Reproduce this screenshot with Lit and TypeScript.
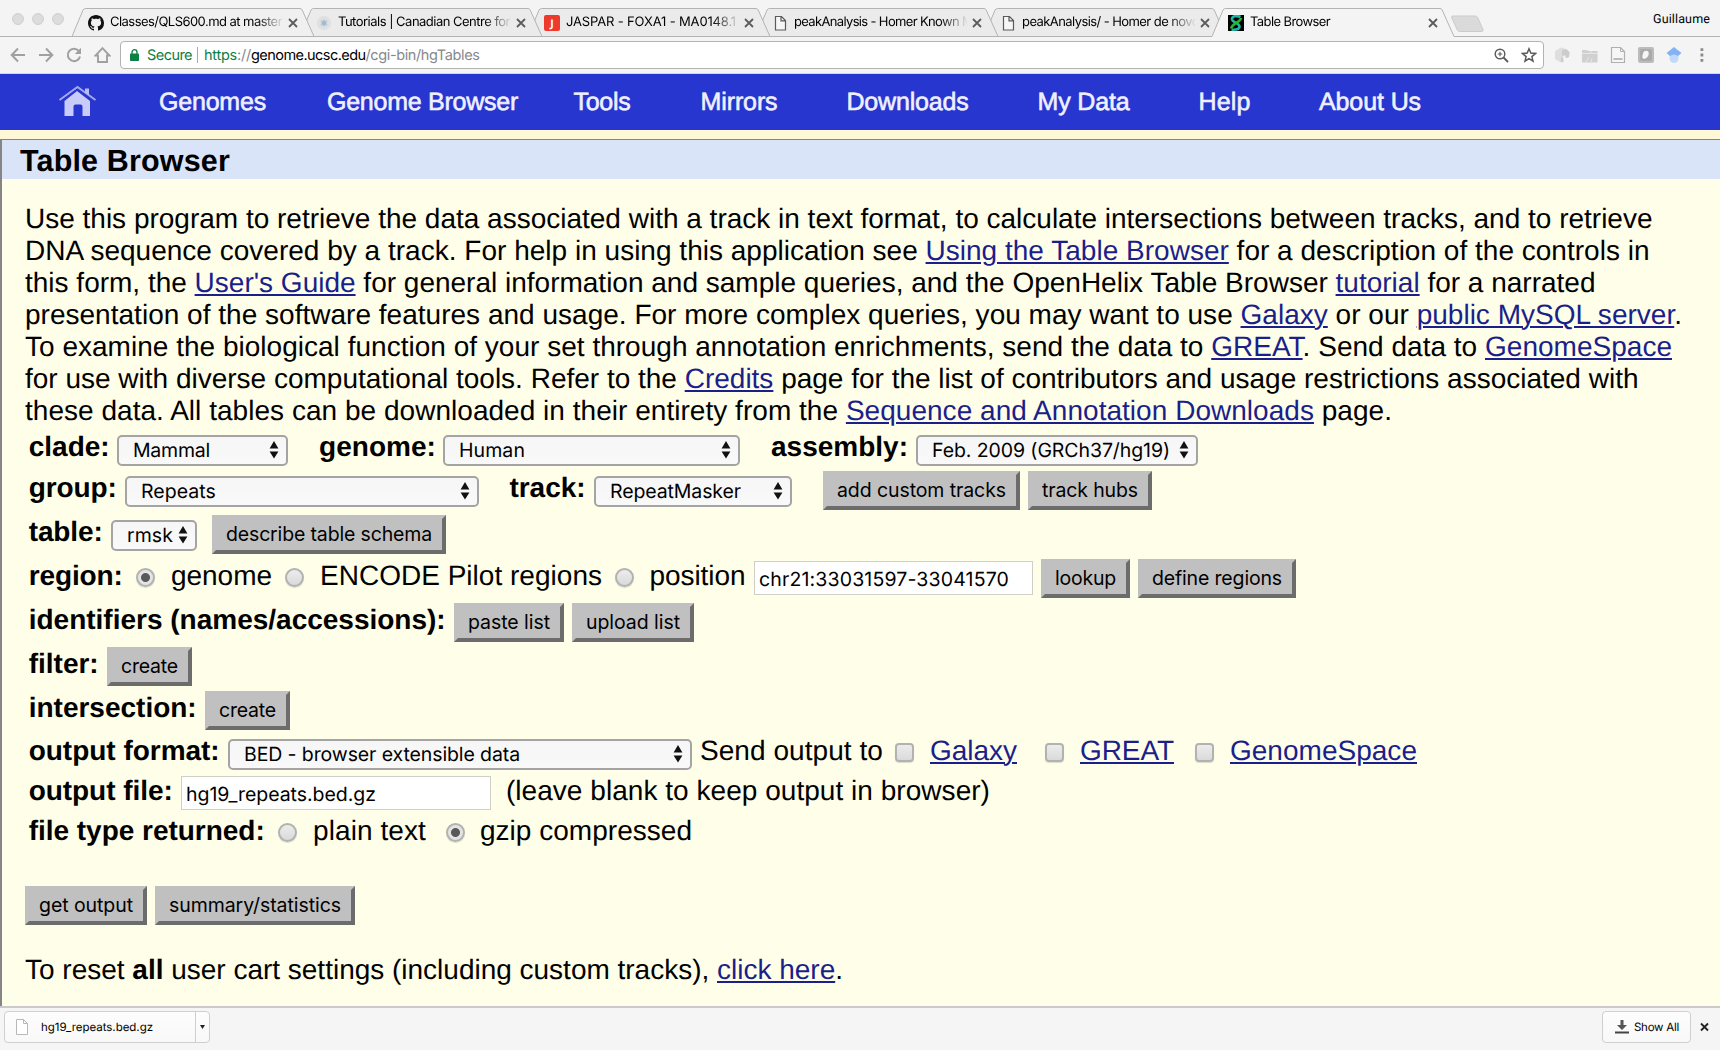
import { LitElement, html, css, svg, TemplateResult } from "lit";
import { customElement, property } from "lit/decorators.js";
import { classMap } from "lit/directives/class-map.js";

/** One line of text, tracked so that it spans exactly `w` pixels. */
@customElement("fit-text")
class FitText extends LitElement {
  @property({ type: Number }) w = 0;
  static styles = css`
    :host { display: inline-block; white-space: nowrap; }
  `;
  render() {
    return html`<slot></slot>`;
  }
  firstUpdated() {
    const natural = this.getBoundingClientRect().width;
    const count = (this.textContent || "").length;
    if (this.w && count) this.style.letterSpacing = `${(this.w - natural) / count}px`;
  }
}

type Item = { x: number; w: number; body: TemplateResult };

const fit = (w: number, body: unknown) => html`<fit-text .w=${w}>${body}</fit-text>`;
const label = (x: number, w: number, t: string): Item => ({ x, w, body: html`<b class="label">${fit(w - 1, t)}</b>` });
const text = (x: number, w: number, t: string): Item => ({ x, w, body: html`<span class="label">${fit(w - 1, t)}</span>` });
const link = (x: number, w: number, t: string): Item => ({
  x, w, body: html`<span class="label">${fit(w, html`<a>${t}</a>`)}</span>`,
});
const button = (x: number, w: number, t: string): Item => ({
  x, w, body: html`<button class="btn">${fit(w - 28, t)}</button>`,
});
const input = (x: number, w: number, tw: number, t: string): Item => ({
  x, w, body: html`<span class="field">${fit(tw, t)}</span>`,
});
const select = (x: number, w: number, tw: number, t: string): Item => ({
  x, w,
  body: html`<span class="select">${fit(tw, t)}
    <svg width="10" height="18" viewBox="0 0 10 18"><path d="M5 0 9.4 7.4H.6zM5 17.6.6 10.4h8.8z" fill="#111" /></svg></span>`,
});
const radio = (x: number, on = false): Item => ({ x, w: 19, body: html`<i class=${classMap({ radio: true, on })}></i>` });
const check = (x: number): Item => ({ x, w: 19, body: html`<i class="check"></i>` });

const rows: { h: number; items: Item[] }[] = [
  { h: 41, items: [
    label(28.700, 82, "clade:"), select(117, 171, 77, "Mammal"),
    label(319, 118, "genome:"), select(443, 297, 66, "Human"),
    label(771, 138, "assembly:"), select(916, 282, 238, "Feb. 2009 (GRCh37/hg19)"),
  ] },
  { h: 44, items: [
    label(28.700, 89, "group:"), select(125, 354, 75, "Repeats"),
    label(509.500, 77, "track:"), select(594, 198, 131, "RepeatMasker"),
    button(823, 197, "add custom tracks"), button(1028, 124, "track hubs"),
  ] },
  { h: 44, items: [label(28.700, 75, "table:"), select(111, 86, 46, "rmsk"), button(212, 234, "describe table schema")] },
  { h: 44, items: [
    label(28.700, 95, "region:"), radio(136, true), text(171, 102, "genome"), radio(285),
    text(320, 283, "ENCODE Pilot regions"), radio(615), text(649.500, 97, "position"),
    input(754, 279, 250, "chr21:33031597-33041570"), button(1041, 89, "lookup"), button(1138, 158, "define regions"),
  ] },
  { h: 44, items: [label(28.700, 418, "identifiers (names/accessions):"), button(454, 110, "paste list"), button(572, 122, "upload list")] },
  { h: 44, items: [label(28.700, 71, "filter:"), button(107, 85, "create")] },
  { h: 43, items: [label(28.700, 169, "intersection:"), button(205, 85, "create")] },
  { h: 40, items: [
    label(28.700, 192, "output format:"), select(228, 464, 276, "BED - browser extensible data"),
    text(700, 184, "Send output to"), check(895), link(930, 87, "Galaxy"), check(1045), link(1080, 94, "GREAT"),
    check(1195), link(1230, 187, "GenomeSpace"),
  ] },
  { h: 40, items: [
    label(28.700, 145, "output file:"), input(181, 310, 190, "hg19_repeats.bed.gz"),
    text(506, 485, "(leave blank to keep output in browser)"),
  ] },
  { h: 72, items: [
    label(28.700, 237, "file type returned:"), radio(278), text(313, 114, "plain text"), radio(446, true),
    text(480, 213, "gzip compressed"),
  ] },
  { h: 65, items: [button(25, 122, "get output"), button(155, 200, "summary/statistics")] },
];

const paragraph: [number, TemplateResult][] = [
  [1627.500, html`Use this program to retrieve the data associated with a track in text format, to calculate intersections between tracks, and to retrieve`],
  [1624.500, html`DNA sequence covered by a track. For help in using this application see <a>Using the Table Browser</a> for a description of the controls in`],
  [1570.500, html`this form, the <a>User's Guide</a> for general information and sample queries, and the OpenHelix Table Browser <a>tutorial</a> for a narrated`],
  [1657, html`presentation of the software features and usage. For more complex queries, you may want to use <a>Galaxy</a> or our <a>public MySQL server</a>.`],
  [1647, html`To examine the biological function of your set through annotation enrichments, send the data to <a>GREAT</a>. Send data to <a>GenomeSpace</a>`],
  [1613.500, html`for use with diverse computational tools. Refer to the <a>Credits</a> page for the list of contributors and usage restrictions associated with`],
  [1367, html`these data. All tables can be downloaded in their entirety from the <a>Sequence and Annotation Downloads</a> page.`],
];

const page = svg`<path d="M3.5 1.5h6l4 4v9.5h-10z M9 1.5v4.3h4.5" fill="#f6f6f6" stroke="#5a5a5a" stroke-width="1.2"/>`;
const icons = {
  github: svg`<path d="M8 0C3.58 0 0 3.58 0 8c0 3.54 2.29 6.53 5.47 7.59.4.07.55-.17.55-.38 0-.19-.01-.82-.01-1.49-2.01.37-2.53-.49-2.69-.94-.09-.23-.48-.94-.82-1.13-.28-.15-.68-.52-.01-.53.63-.01 1.08.58 1.23.82.72 1.21 1.87.87 2.33.66.07-.52.28-.87.51-1.07-1.78-.2-3.64-.89-3.64-3.95 0-.87.31-1.59.82-2.15-.08-.2-.36-1.02.08-2.12 0 0 .67-.21 2.2.82.64-.18 1.32-.27 2-.27s1.36.09 2 .27c1.53-1.04 2.2-.82 2.2-.82.44 1.1.16 1.92.08 2.12.51.56.82 1.27.82 2.15 0 3.07-1.87 3.75-3.65 3.95.29.25.54.73.54 1.48 0 1.07-.01 1.93-.01 2.2 0 .21.15.46.55.38A8.01 8.01 0 0 0 16 8c0-4.42-3.58-8-8-8z" fill="#111"/>`,
  snow: svg`<circle cx="8" cy="8" r="7.2" fill="#e0e0e0"/><path d="M8 4.500v7M5 6l6 4M11 6 5 10" stroke="#b9cbd9" stroke-width="2.200"/><circle cx="8" cy="8" r="2" fill="#9fb9cc"/>`,
  jaspar: svg`<rect width="16" height="16" rx="2" fill="#ee3a2c"/><text x="8" y="12" font-family="Open Sans, sans-serif" font-size="10.5" font-weight="700" text-anchor="middle" fill="#fff">J</text>`,
  page,
  helix: svg`<rect width="16" height="16" fill="#000"/><path d="M12.500 2C9 .3 3.500 1 4 4.500c.5 3 7.500 3.500 7.500 7 0 3-4 3.500-8 3" fill="none" stroke="#1fb5a4" stroke-width="2.600"/><path d="M13 3c0 4-9.300 5.500-9.800 10.500" fill="none" stroke="#2bb52b" stroke-width="2.600"/>`,
};

const tabs: { icon: unknown; w: number; title: string; active?: boolean }[] = [
  { icon: icons.github, w: 172, title: "Classes/QLS600.md at master" },
  { icon: icons.snow, w: 172, title: "Tutorials | Canadian Centre for" },
  { icon: icons.jaspar, w: 170, title: "JASPAR - FOXA1 - MA0148.1" },
  { icon: icons.page, w: 179, title: "peakAnalysis - Homer Known M" },
  { icon: icons.page, w: 177, title: "peakAnalysis/ - Homer de novo" },
  { icon: icons.helix, w: 80, title: "Table Browser", active: true },
];

const menu: [number, number, string][] = [
  [159, 107, "Genomes"], [327, 191, "Genome Browser"], [573.500, 57, "Tools"], [700.500, 77, "Mirrors"],
  [846.500, 122, "Downloads"], [1037.500, 92, "My Data"], [1198.500, 52, "Help"], [1319, 102, "About Us"],
];

/** Turns start positions along a line into the gaps between its items. */
const gaps = <T,>(items: T[], start: (t: T) => number, width: (t: T) => number, origin = 0) => {
  let end = origin;
  return items.map((t) => {
    const gap = start(t) - end;
    end = start(t) + width(t);
    return { t, gap };
  });
};

@customElement("app-root")
class AppRoot extends LitElement {
  static styles = css`
    :host {
      display: flex; flex-direction: column; width: 1720px; height: 1050px; overflow: hidden;
      font-family: "Liberation Sans", Arial, sans-serif; color: #000; background: #fffee8;
      text-rendering: geometricPrecision;
    }
    * { box-sizing: border-box; }
    svg { display: block; flex: none; }
    a { color: #1a1f8c; text-decoration: underline; text-decoration-thickness: 2px; text-underline-offset: 2px; text-decoration-skip-ink: auto; }

    .strip { display: flex; height: 37px; background: #f4f4f4; border-bottom: 1px solid #b3b3b3; font: 13px/17px Inter, Roboto, sans-serif; flex: none; }
    .lights { display: flex; gap: 8px; padding: 13px 0 0 11.500px; width: 72px; flex: none; }
    .lights i { width: 12.300px; height: 12.300px; flex: none; border-radius: 50%; background: #dcdcdc; border: 1px solid #d0d0d0; }
    .tab { position: relative; width: 242px; height: 29px; margin: 8px -14px 0 0; padding: 7px 0 0 16px; display: flex; flex: none; }
    .shape { position: absolute; left: 0; top: 0; }
    .tab .icon { position: relative; }
    .name { position: relative; flex: none; width: 180px; height: 17px; margin: -1px 0 0 6px; overflow: hidden; -webkit-mask-image: linear-gradient(90deg, #000 146px, transparent 174px); }
    .close { position: relative; margin: 3px 0 0 -2.500px; }
    .newtab { margin: 15px 0 0 11px; }
    .user { margin: 11px 10px 0 auto; font: 12.500px/18px Roboto, Inter, sans-serif; }

    .bar { display: flex; align-items: center; height: 37px; background: #f4f4f4; border-bottom: 1px solid #d4d4da; flex: none; }
    .nav { display: flex; gap: 12px; padding-left: 10px; width: 120px; flex: none; }
    .url { display: flex; align-items: center; flex: none; width: 1424px; height: 28px; border: 1px solid #b3b3b3; border-radius: 4px; background: #fff; font: 14.500px/20px Inter, Roboto, sans-serif; padding: 0 6px 0 9px; }
    .url fit-text { margin-top: 1px; }
    .secure { color: #0b8043; margin-left: 8px; }
    .scheme { color: #0b8043; }
    .sep { width: 1px; height: 16px; background: #a8a8a8; margin: 0 6px 0 5px; }
    .grey { color: #85888c; }
    .url svg.zoom { margin-left: auto; margin-right: 12px; }
    .exts { display: flex; gap: 12px; padding-left: 10px; }

    .menu { display: flex; height: 56px; background: #2636cf; flex: none; color: #f0f0ff; font-size: 25px; line-height: 30px; -webkit-text-stroke: 0.6px #f0f0ff; }
    .menu span { margin-top: 13px; flex: none; }
    .home { margin: 11px 0 0 58px; width: 40px; }
    .cream { height: 9px; background: #fff8d6; flex: none; }
    .panel { flex: 1; min-height: 0; border-left: 2px solid #858585; border-top: 1px solid #858585; }
    h1 { margin: 0; height: 39px; padding: 1px 0 0 18px; background: #d9e4f8; font-size: 30.500px; line-height: 41px; }
    .text { padding: 24px 0 0 23px; font-size: 28px; line-height: 32px; height: 251px; }
    .text div { height: 32px; }

    .row { display: flex; align-items: flex-start; margin-left: -2px; font-size: 28px; line-height: 32px; }
    .cell { flex: none; display: flex; }
    .label { display: block; margin-top: 1px; }
    .btn { width: 100%; height: 39px; margin: 0; padding: 0 0 2px 10px; text-align: left; border: 4px solid; border-color: #c0c0c0 #6c6c6c #6c6c6c #c0c0c0; background: #c0c0c0; color: #000; font: 19.500px/24px Inter, Roboto, sans-serif; }
    .select { display: flex; justify-content: space-between; align-items: center; width: 100%; height: 31px; margin-top: 5px; padding: 0 7px 1px 14px; border: 2px solid #a4a4a4; border-radius: 5px; background: linear-gradient(#f6f6f6, #f9f9f9); font: 19.500px/26px Inter, Roboto, sans-serif; white-space: nowrap; }
    .field { display: flex; align-items: center; width: 100%; height: 34px; margin-top: 2px; padding: 1px 0 0 4px; border: 1px solid #d0d0c8; background: #fff; font: 19.500px/26px Inter, Roboto, sans-serif; }
    .radio, .check { display: block; width: 19px; height: 19px; margin-top: 9px; border: 2px solid #b2b2b2; background: linear-gradient(#ececec, #dadada); box-shadow: 0 1px 1px #0002; }
    .radio { border-radius: 50%; }
    .check { border-radius: 4px; }
    .radio.on { background: radial-gradient(circle, #595959 0 4px, #e4e4e4 5px); }
    .reset { padding: 3px 0 0 23px; font-size: 28px; line-height: 32px; }

    .shelf { display: flex; align-items: flex-start; height: 44px; padding: 3px 11px 0 4px; border-top: 2px solid #cacaca; background: #f5f5f5; flex: none; font: 11.500px/16px Inter, Roboto, sans-serif; }
    .chip { display: flex; align-items: center; height: 32px; border: 1px solid #cfcfcf; border-radius: 4px; background: linear-gradient(#fdfdfd, #f8f8f8); }
    .file { width: 206px; padding-left: 11px; }
    .file fit-text { margin-left: 13px; }
    .drop { margin-left: auto; height: 30px; width: 14px; border-left: 1px solid #cfcfcf; display: flex; align-items: center; justify-content: center; }
    .all { width: 89px; margin-left: auto; padding-left: 12px; }
    .all fit-text { margin-left: 5px; }
    .x { margin: 11px 0 0 9px; }
  `;

  private cross(size: number, color: string) {
    return svg`<path d="M1 1 ${size - 1} ${size - 1}M${size - 1} 1 1 ${size - 1}" stroke=${color} stroke-width="1.800" fill="none"/>`;
  }

  private chrome() {
    return html`
      <div class="strip">
        <div class="lights"><i></i><i></i><i></i></div>
        ${tabs.map(
          (t, i) => html`<div class="tab" style="z-index:${t.active ? 9 : 6 - i}">
            <svg class="shape" width="242" height="29" viewBox="0 0 242 29">
              <path d="M0 28.500 11 2Q12 .5 13.500.5H228Q229.500.5 230.200 2L242 28.500${t.active ? "V29H0z" : "z"}" fill=${t.active ? "#f4f4f4" : i ? "#ebebeb" : "#f0f0f0"} />
              <path d="M0 28.500 11 2Q12 .5 13.500.5H228Q229.500.5 230.200 2L242 28.500${t.active ? "" : "z"}" fill="none" stroke="#b3b3b3" />
            </svg>
            <svg class="icon" width="16" height="16" viewBox="0 0 16 16">${t.icon}</svg>
            <div class="name">${fit(t.w, t.title)}</div>
            <svg class="close" width="10" height="10" viewBox="0 0 10 10">${this.cross(10, "#5c5c5c")}</svg>
          </div>`
        )}
        <svg class="newtab" width="34" height="18" viewBox="0 0 34 18"><path d="M2 1h22q2 0 2.700 1.500l5.300 12q.7 2-1.500 2H9q-2 0-2.800-1.700L.8 3Q0 1 2 1z" fill="#dadada" stroke="#cbcbcb" /></svg>
        <div class="user">${fit(57, "Guillaume")}</div>
      </div>
      <div class="bar">
        <div class="nav">
          <svg width="16" height="16" viewBox="0 0 16 16"><path d="M15 8H2M8 1.500 1.700 8 8 14.500" fill="none" stroke="#a0a0a0" stroke-width="2" /></svg>
          <svg width="16" height="16" viewBox="0 0 16 16"><path d="M1 8h13M8 1.500 14.300 8 8 14.500" fill="none" stroke="#a0a0a0" stroke-width="2" /></svg>
          <svg width="16" height="16" viewBox="0 0 16 16"><path d="M12.800 4A6.200 6.200 0 1 0 14 9.500" fill="none" stroke="#a0a0a0" stroke-width="2" /><path d="M15 .8V7H8.800z" fill="#a0a0a0" /></svg>
          <svg width="17" height="16" viewBox="0 0 17 16"><path d="M8.500 1.200 1.500 8.500H4V15h9V8.500h2.500z" fill="none" stroke="#a0a0a0" stroke-width="1.900" /></svg>
        </div>
        <div class="url">
          <svg width="9" height="12" viewBox="0 0 9 12"><rect y="4.500" width="9" height="7.500" rx=".8" fill="#0b8043" /><path d="M2 5V3a2.500 2.300 0 0 1 5 0v2" fill="none" stroke="#0b8043" stroke-width="1.300" /></svg>
          <span class="secure">${fit(45, "Secure")}</span><i class="sep"></i>
          <span class="scheme">${fit(33, "https")}</span><span class="grey">${fit(14, "://")}</span><span>${fit(114.500, "genome.ucsc.edu")}</span><span class="grey">${fit(114, "/cgi-bin/hgTables")}</span>
          <svg class="zoom" width="15" height="15" viewBox="0 0 15 15"><circle cx="6" cy="6" r="4.800" fill="none" stroke="#5a5a5a" stroke-width="1.400" /><path d="M6 3.700v4.600M3.700 6h4.600" stroke="#5a5a5a" stroke-width="1.100" /><path d="m9.500 9.500 4.500 4.500" stroke="#5a5a5a" stroke-width="1.800" /></svg>
          <svg width="16" height="16" viewBox="0 0 16 16"><path d="m8 1.800 1.800 4.300 4.700.4-3.600 3.100 1.100 4.600L8 11.700l-4 2.500 1.100-4.600L1.500 6.500l4.700-.4z" fill="none" stroke="#5a5a5a" stroke-width="1.500" /></svg>
        </div>
        <div class="exts">
          <svg width="16" height="16" viewBox="0 0 16 16"><path d="M1 4 7 .5l5 1.500 3.500 3-.5 5-3 1-1-3-2 1.500.5 5L7 15.500 1 12z" fill="#dedede" /><path d="M8 3l4-1 3.500 3-.5 5-3 1-1-3-3 1z M7 15.500V11l2-1 .5 4.500z" fill="#cccccc" /></svg>
          <svg width="16" height="16" viewBox="0 0 16 16"><path d="M0 3h5l1 1h9.500v11.500H0z" fill="#d0d0d0" /><path d="M0 6.500h16M4 15l3-5M9 15l1-4M8 6l2-2" stroke="#e6e6e6" /></svg>
          <svg width="16" height="16" viewBox="0 0 16 16"><path d="M1.500.5h9l4 4v11h-13z" fill="#f6f6f6" stroke="#b0b0b0" stroke-width="1.200" /><path d="M10.500.5v4h4" fill="none" stroke="#b0b0b0" /><path d="M3.500 12h9" stroke="#bbb" stroke-width="2" /></svg>
          <svg width="16" height="16" viewBox="0 0 16 16"><rect width="16" height="16" rx="2" fill="#bcbcbc" /><rect x="2" y="2" width="12" height="12" rx="2" fill="#aaa" /><path d="M5.500 5q3-2.500 5 0 1 4-3 6.500-4 1-3-3z" fill="#f6f6f6" /></svg>
          <svg width="16" height="16" viewBox="0 0 16 16"><path d="M3.500 7h9v5q-1 4-4.500 4t-4.500-4z" fill="#c3d9fa" /><path d="m8 0 7.500 6-3.500 3q-4-3-8 0L.5 6z" fill="#85b2f3" /></svg>
          <svg width="16" height="16" viewBox="0 0 16 16"><path d="M6.500 1.300h2.800v2.800H6.500zM6.500 6.600h2.800v2.800H6.500zM6.500 11.900h2.800v2.800H6.500z" fill="#8a8a8a" /></svg>
        </div>
      </div>`;
  }

  render() {
    return html`
      ${this.chrome()}
      <div class="menu">
        <svg class="home" width="40" height="32" viewBox="0 0 40 32"><path d="M1.500 15 19.500 2 37.500 15" fill="none" stroke="#a3a8ee" stroke-width="2" /><path d="M27 3.500h4v7l-4-3z" fill="#b9bcf4" /><path d="M19 6 32 16v15h-7.500V21.500q0-2-2-2h-5q-2 0-2 2V31H6.500V16z" fill="#c9cbf8" /></svg>
        ${gaps(menu, (m) => m[0], (m) => m[1], 98).map(
          ({ t, gap }) => html`<span style="margin-left:${gap}px;width:${t[1]}px">${fit(t[1], t[2])}</span>`
        )}
      </div>
      <div class="cream"></div>
      <div class="panel">
        <h1>${fit(210, "Table Browser")}</h1>
        <div class="text">${paragraph.map(([w, line]) => html`<div>${fit(w, line)}</div>`)}</div>
        ${rows.map(
          (r) => html`<div class="row" style="height:${r.h}px">
            ${gaps(r.items, (i) => i.x, (i) => i.w).map(
              ({ t, gap }) => html`<div class="cell" style="margin-left:${gap}px;width:${t.w}px">${t.body}</div>`
            )}
          </div>`
        )}
        <div class="reset">${fit(818, html`To reset <b>all</b> user cart settings (including custom tracks), <a>click here</a>.`)}</div>
      </div>
      <div class="shelf">
        <div class="chip file">
          <svg width="12" height="16" viewBox="0 0 12 16"><path d="M.5.5h7l4 4v11H.5zM7.500.5v4h4" fill="#fff" stroke="#b8b8b8" /></svg>
          ${fit(112, "hg19_repeats.bed.gz")}
          <span class="drop"><svg width="5" height="4" viewBox="0 0 5 4"><path d="M0 0h5L2.500 4z" fill="#222" /></svg></span>
        </div>
        <div class="chip all">
          <svg width="14" height="14" viewBox="0 0 14 14"><path d="M5.500 0h3v5H12L7 10 2 5h3.500z" fill="#555" /><path d="M0 11.500h14V13.500H0z" fill="#444" /></svg>
          ${fit(45, "Show All")}
        </div>
        <svg class="x" width="9" height="10" viewBox="0 0 9 9">${this.cross(9, "#222")}</svg>
      </div>`;
  }
}
